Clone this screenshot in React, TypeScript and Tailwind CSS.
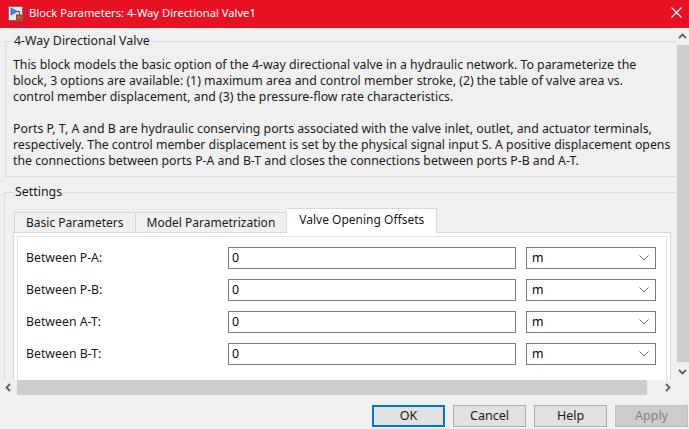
import React from 'react'

const rows = ['Between P-A:', 'Between P-B:', 'Between A-T:', 'Between B-T:']

function BlockIcon() {
  return (
    <svg width="15" height="15" viewBox="0 0 15 15">
      <rect x="0.5" y="0.5" width="14" height="14" fill="#e4e4e4" stroke="#6f6f6f" />
      <path d="M3 2 L3 9 L9 5.5 Z" fill="#3a8ee6" stroke="#1f5fa8" strokeWidth="0.8" />
      <path d="M9 5.5 H11.5 V9" stroke="#7a3a1a" fill="none" strokeWidth="1" />
      <rect x="8.5" y="9" width="5" height="4.5" fill="#e0582a" stroke="#7a2a10" strokeWidth="0.8" />
    </svg>
  )
}

function Chevron({ dir }: { dir: 'up' | 'down' | 'left' | 'right' }) {
  const d = {
    up: 'M1 6 L4.5 2.5 L8 6',
    down: 'M1 3 L4.5 6.5 L8 3',
    left: 'M6 1 L2.5 4.5 L6 8',
    right: 'M3 1 L6.5 4.5 L3 8',
  }[dir]
  return (
    <svg width="9" height="9" viewBox="0 0 9 9">
      <path d={d} stroke="#606060" strokeWidth="1.8" fill="none" />
    </svg>
  )
}

export default function App() {
  return (
    <div
      className="w-[689px] h-[429px] overflow-hidden bg-[#f0f0f0] text-[#000] flex flex-col text-[12px]"
      style={{ fontFamily: '"Noto Sans", "Open Sans", sans-serif' }}
    >
      {/* Title bar */}
      <div className="h-[28px] bg-[#e81123] flex items-center shrink-0">
        <div className="ml-[8px] mt-[-1px]">
          <BlockIcon />
        </div>
        <div className="ml-[6px] text-white text-[11.2px] leading-[16px] mt-[-2px]">
          Block Parameters: 4-Way Directional Valve1
        </div>
        <div className="ml-auto mr-[6px] w-[14px] h-[14px] flex items-center justify-center mt-[-3px]">
          <svg width="11" height="11" viewBox="0 0 11 11">
            <path d="M0.5 0.5 L10.5 10.5 M10.5 0.5 L0.5 10.5" stroke="#fff" strokeWidth="1.1" />
          </svg>
        </div>
      </div>

      {/* Scrollable area */}
      <div className="flex h-[352px] shrink-0">
        <div className="w-[676px] h-[352px] overflow-hidden">
          {/* Description group */}
          <div className="ml-[5px] mt-[13px] w-[700px] h-[136px] border border-[#dcdcdc] pl-[7px]">
            <div className="-mt-[9px] w-fit bg-[#f0f0f0] px-[1px] text-[12.4px] leading-[16px] text-[#1a1a1a]">
              4-Way Directional Valve
            </div>
            <div className="mt-[8px] text-[12.3px] leading-[16px] text-[#1a1a1a] whitespace-nowrap">
              <div>This block models the basic option of the 4-way directional valve in a hydraulic network. To parameterize the</div>
              <div>block, 3 options are available: (1) maximum area and control member stroke, (2) the table of valve area vs.</div>
              <div>control member displacement, and (3) the pressure-flow rate characteristics.</div>
              <div className="h-[16px]" />
              <div>Ports P, T, A and B are hydraulic conserving ports associated with the valve inlet, outlet, and actuator terminals,</div>
              <div>respectively. The control member displacement is set by the physical signal input S. A positive displacement opens</div>
              <div>the connections between ports P-A and B-T and closes the connections between ports P-B and A-T.</div>
            </div>
          </div>

          {/* Settings group */}
          <div className="ml-[4px] mt-[15px] w-[700px] h-[300px] border border-[#dcdcdc] pl-[8px]">
            <div className="-mt-[9px] ml-[1px] w-fit bg-[#f0f0f0] px-[1px] text-[12.4px] leading-[16px] text-[#1a1a1a]">
              Settings
            </div>
            {/* Tabs */}
            <div className="mt-[8px] ml-[1px] flex items-end h-[24px] relative z-10">
              <div className="h-[20px] px-[11px] border border-[#d9d9d9] border-b-0 bg-[#f0f0f0] flex items-center text-[12px] text-[#1a1a1a]">
                Basic Parameters
              </div>
              <div className="h-[20px] px-[11px] border border-[#d9d9d9] border-l-0 border-b-0 bg-[#f0f0f0] flex items-center text-[12px] text-[#1a1a1a]">
                Model Parametrization
              </div>
              <div className="h-[25px] -mb-[1px] px-[12px] border border-[#d9d9d9] border-l-0 border-b-0 bg-white flex items-center text-[12px] text-[#1a1a1a] pb-[2px]">
                Valve Opening Offsets
              </div>
            </div>
            {/* Tab panel */}
            <div className="w-[658px] h-[200px] border border-[#d9d9d9] bg-white p-[3px]">
              <div className="h-full border border-[#e3e3e3] bg-white pl-[8px] pt-[10px] flex flex-col gap-[10px]">
                {rows.map((r) => (
                  <div key={r} className="flex items-center h-[22px]">
                    <div className="w-[202px] text-[12.3px] text-[#1a1a1a]">{r}</div>
                    <div className="w-[288px] h-[22px] border border-[#7a7a7a] bg-white flex items-center pl-[3px] text-[12.3px]">
                      0
                    </div>
                    <div className="ml-[10px] w-[130px] h-[22px] border border-[#7a7a7a] bg-white flex items-center pl-[5px] pr-[6px] text-[12.3px]">
                      <span>m</span>
                      <svg className="ml-auto" width="10" height="6" viewBox="0 0 10 6">
                        <path d="M0.5 0.5 L5 5 L9.5 0.5" stroke="#6a6a6a" fill="none" strokeWidth="1" />
                      </svg>
                    </div>
                  </div>
                ))}
              </div>
            </div>
          </div>
        </div>

        {/* Vertical scrollbar */}
        <div className="w-[13px] h-[352px] flex flex-col bg-[#f0f0f0]">
          <div className="h-[17px] flex items-center justify-center">
            <Chevron dir="up" />
          </div>
          <div className="flex-1 bg-[#cdcdcd] ml-[1px]" />
          <div className="h-[18px] flex items-center justify-center">
            <Chevron dir="down" />
          </div>
        </div>
      </div>

      {/* Horizontal scrollbar */}
      <div className="flex h-[15px] shrink-0">
        <div className="w-[17px] flex items-center justify-center">
          <Chevron dir="left" />
        </div>
        <div className="w-[630px] bg-[#cdcdcd]" />
        <div className="w-[12px]" />
        <div className="w-[17px] flex items-center justify-center">
          <Chevron dir="right" />
        </div>
      </div>

      {/* Buttons */}
      <div className="flex justify-end gap-[8px] pt-[10px] pr-[1px]">
        <button className="w-[73px] h-[22px] border-2 border-[#0078d7] bg-[#e1e1e1] text-[12.5px] leading-none text-[#1a1a1a]">
          OK
        </button>
        <button className="w-[73px] h-[22px] border border-[#adadad] bg-[#e1e1e1] text-[12.5px] leading-none text-[#1a1a1a]">
          Cancel
        </button>
        <button className="w-[73px] h-[22px] border border-[#adadad] bg-[#e1e1e1] text-[12.5px] leading-none text-[#1a1a1a]">
          Help
        </button>
        <button className="w-[73px] h-[22px] border border-[#bfbfbf] bg-[#cccccc] text-[12.5px] leading-none text-[#838383]">
          Apply
        </button>
      </div>
    </div>
  )
}
